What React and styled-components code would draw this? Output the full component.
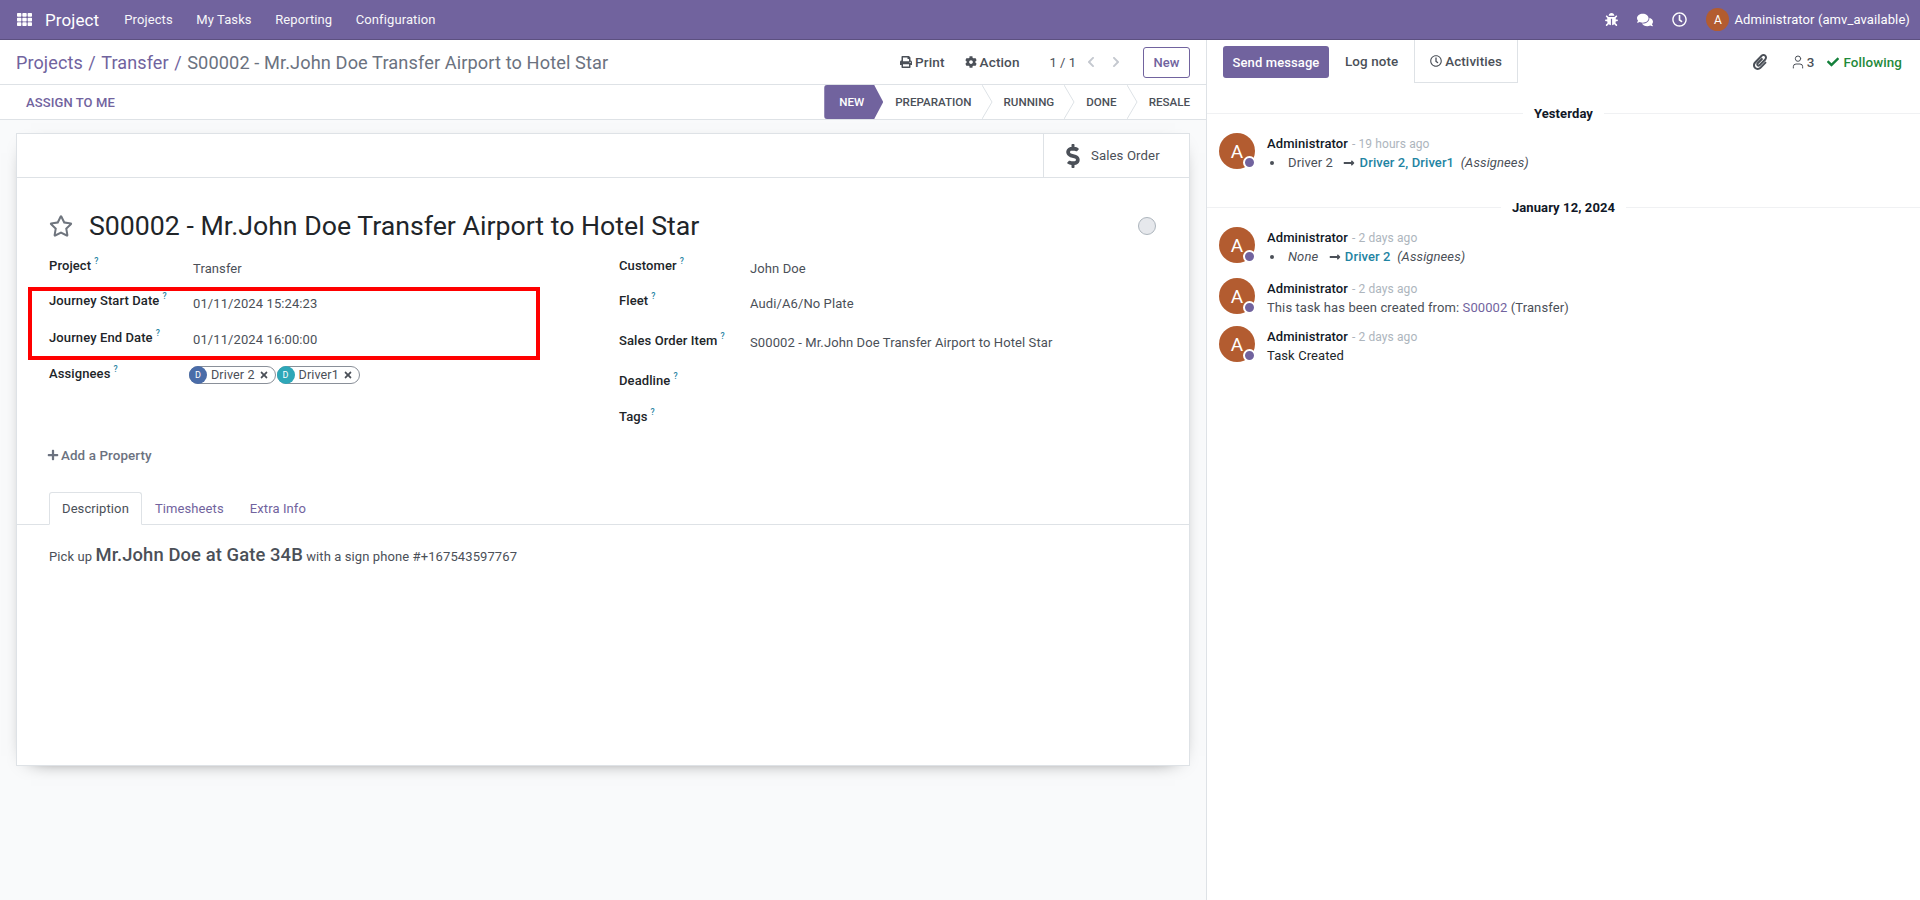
import React from "react";
import styled, { createGlobalStyle } from "styled-components";
import { User } from "lucide-react";
import {
  FaBug,
  FaCheck,
  FaChevronLeft,
  FaChevronRight,
  FaCog,
  FaComments,
  FaDollarSign,
  FaLongArrowAltRight,
  FaPaperclip,
  FaPlus,
  FaPrint,
  FaRegClock,
  FaRegStar,
  FaTh,
  FaTimes,
} from "react-icons/fa";

const PURPLE = "#71639e";
const LINK_BLUE = "#1f84a3";

const GlobalStyle = createGlobalStyle`
  html, body { margin: 0; padding: 0; height: 100%; }
  body {
    font-family: Roboto, "Noto Sans", sans-serif;
    font-size: 13px;
    letter-spacing: 0.1px;
    color: #4b5058;
    background: #fff;
    overflow: hidden;
  }
`;

const Page = styled.div`
  width: 1920px;
  height: 900px;
  display: flex;
  flex-direction: column;
`;

const Navbar = styled.header`
  height: 40px;
  box-sizing: border-box;
  background: ${PURPLE};
  border-bottom: 1px solid #5c5080;
  color: #fff;
  display: flex;
  align-items: center;
  padding: 0 10px 0 17px;
`;

const Brand = styled.span`
  font-size: 17px;
  margin: 0 25px 0 13px;
`;

const NavLink = styled.span`
  margin-right: 23.5px;
  opacity: 0.95;
`;

const NavRight = styled.div`
  margin-left: auto;
  display: flex;
  align-items: center;
  gap: 19px;
`;

const NavAvatar = styled.span`
  width: 23px;
  height: 23px;
  border-radius: 50%;
  background: #b35c30;
  display: flex;
  align-items: center;
  justify-content: center;
  font-size: 12px;
  margin-right: -14px;
`;

const Columns = styled.div`
  flex: 1;
  display: flex;
  min-height: 0;
`;

const Main = styled.main`
  width: 1206px;
  background: #f9fafb;
  display: flex;
  flex-direction: column;
`;

const ControlRow = styled.div`
  height: 45px;
  box-sizing: border-box;
  background: #fff;
  border-bottom: 1px solid #dee2e6;
  display: flex;
  align-items: center;
  padding: 0 16px;
`;

const Crumbs = styled.div`
  font-size: 18px;
  display: flex;
  gap: 5.5px;
  color: ${PURPLE};
`;

const CrumbCurrent = styled.span`
  color: #6b7280;
  font-size: 18.2px;
`;

const Actions = styled.div`
  margin-left: auto;
  display: flex;
  align-items: center;
  font-size: 13.6px;
  font-weight: 500;
`;

const ActionItem = styled.span`
  display: flex;
  align-items: center;
  gap: 3px;
  margin-right: ${(p) => p.$gap}px;
`;

const Pager = styled.span`
  font-weight: 400;
  font-size: 13px;
  margin-right: 9px;
  letter-spacing: 0;
`;

const PagerArrow = styled.span`
  color: #c4c8cf;
  font-size: 12px;
  display: flex;
  margin-right: 13px;
`;

const NewButton = styled.span`
  margin-left: 8px;
  width: 47px;
  height: 31px;
  box-sizing: border-box;
  border: 1px solid ${PURPLE};
  border-radius: 3px;
  color: ${PURPLE};
  display: flex;
  align-items: center;
  justify-content: center;
  font-size: 13px;
  font-weight: 500;
`;

const StatusRow = styled.div`
  height: 35px;
  box-sizing: border-box;
  background: #fff;
  border-bottom: 1px solid #dee2e6;
  display: flex;
  align-items: center;
  justify-content: space-between;
  padding: 0 16px 0 26px;
`;

const AssignLabel = styled.span`
  color: ${PURPLE};
  font-size: 13px;
  font-weight: 500;
`;

const Stages = styled.div`
  display: flex;
  height: 34px;
`;

const Stage = styled.span`
  position: relative;
  display: flex;
  align-items: center;
  font-size: 11.6px;
  letter-spacing: 0;
  font-weight: 500;
  padding-right: ${(p) => (p.$last ? 0 : 21)}px;
  margin-left: ${(p) => (p.$first ? 12 : 11)}px;
  color: #4b5058;
`;

const StageChevron = styled.svg`
  position: absolute;
  right: 0;
  top: 0;
  width: 11px;
  height: 34px;
`;

const ActiveStage = styled.span`
  display: flex;
  align-items: center;
  width: 59px;
  height: 34px;
  box-sizing: border-box;
  padding-left: 15px;
  color: #fff;
  font-size: 11.6px;
  letter-spacing: 0;
  font-weight: 500;
  background: ${PURPLE};
  border-radius: 3px 0 0 3px;
  clip-path: polygon(0 0, 50px 0, 59px 50%, 50px 100%, 0 100%);
`;

const Sheet = styled.section`
  margin: 13px 16px 0 16px;
  height: 633px;
  box-sizing: border-box;
  background: #fff;
  border: 1px solid #dee2e6;
  box-shadow: 0 5px 20px -15px #000;
`;

const ButtonBox = styled.div`
  height: 44px;
  box-sizing: border-box;
  border-bottom: 1px solid #dee2e6;
  display: flex;
  justify-content: flex-end;
`;

const StatButton = styled.div`
  width: 146px;
  box-sizing: border-box;
  border-left: 1px solid #dee2e6;
  display: flex;
  align-items: center;
  padding-left: 17px;
  gap: 6px;
  color: #4b5058;
  font-size: 13.2px;
`;

const TitleRow = styled.div`
  display: flex;
  align-items: center;
  height: 40px;
  margin-top: 28px;
  padding: 0 33px 0 32px;
`;

const Title = styled.h1`
  margin: 0 0 0 16px;
  font-size: 26.7px;
  font-weight: 400;
  letter-spacing: 0;
  color: #212529;
  flex: 1;
`;

const StateDot = styled.span`
  width: 16px;
  height: 16px;
  border-radius: 50%;
  background: #e6e8ec;
  border: 1px solid #adb5bd;
`;

const FormGrid = styled.div`
  display: grid;
  grid-template-columns: 570px 1fr;
  margin-top: 5px;
  padding-left: 32px;
`;

const FormCol = styled.div`
  position: relative;
`;

const Row = styled.div`
  height: ${(p) => p.$h}px;
  display: grid;
  grid-template-columns: ${(p) => p.$label}px 1fr;
  align-items: center;
`;

const Label = styled.span`
  font-weight: 500;
  color: #212529;
  margin-top: -5px;
  white-space: nowrap;
`;

const Help = styled.sup`
  color: ${LINK_BLUE};
  font-size: 8.5px;
  font-weight: 500;
  margin-left: 3px;
  position: relative;
  top: -1px;
`;

const Value = styled.span`
  white-space: nowrap;
`;

const Chips = styled.div`
  display: flex;
  gap: 1px;
  margin-left: -4px;
  margin-top: -3px;
  font-size: 12.6px;
`;

const Chip = styled.span`
  height: 18px;
  box-sizing: border-box;
  border: 1px solid #8a9099;
  border-radius: 9px;
  display: flex;
  align-items: center;
  gap: 4px;
  padding-right: 6px;
`;

const ChipAvatar = styled.span`
  width: 18px;
  height: 18px;
  margin-left: -1px;
  border-radius: 50%;
  background: ${(p) => p.$bg};
  color: #fff;
  font-size: 9px;
  display: flex;
  align-items: center;
  justify-content: center;
`;

const ChipRemove = styled(FaTimes)`
  font-size: 10px;
  color: #4b5058;
`;

const Highlight = styled.div`
  position: absolute;
  left: -21px;
  top: 36px;
  width: 512px;
  height: 73px;
  box-sizing: border-box;
  border: 4px solid #ff0000;
  pointer-events: none;
`;

const AddProperty = styled.div`
  display: flex;
  align-items: center;
  gap: 2px;
  margin: -1px 0 0 30px;
  height: 40px;
  color: #6c7280;
  font-size: 13.4px;
  font-weight: 500;
`;

const TabBar = styled.nav`
  display: flex;
  margin-top: 17px;
  padding-left: 32px;
  height: 33px;
  box-sizing: border-box;
  border-bottom: 1px solid #dee2e6;
`;

const Tab = styled.span`
  height: 33px;
  box-sizing: border-box;
  display: flex;
  align-items: center;
  padding: 0 12px;
  color: ${(p) => (p.$active ? "#4b5058" : PURPLE)};
  background: ${(p) => (p.$active ? "#fff" : "transparent")};
  border: 1px solid ${(p) => (p.$active ? "#dee2e6" : "transparent")};
  border-bottom: 1px solid ${(p) => (p.$active ? "#fff" : "transparent")};
  border-radius: 3px 3px 0 0;
`;

const Description = styled.p`
  margin: 19px 0 0 32px;
`;

const BigText = styled.span`
  font-size: 18.4px;
  font-weight: 500;
`;

const Chatter = styled.aside`
  flex: 1;
  border-left: 1px solid #dee2e6;
  background: #fff;
  min-width: 0;
`;

const ChatterTop = styled.div`
  height: 44px;
  box-sizing: border-box;
  display: flex;
  align-items: flex-start;
  padding: 6px 18px 0 16px;
`;

const SendButton = styled.span`
  width: 106px;
  height: 32px;
  background: ${PURPLE};
  color: #fff;
  border-radius: 3px;
  font-weight: 500;
  display: flex;
  align-items: center;
  justify-content: center;
`;

const ChatterTab = styled.span`
  height: 43px;
  margin-top: -6px;
  box-sizing: border-box;
  padding: ${(p) => (p.$boxed ? "0 15px" : "0 16px")};
  display: flex;
  align-items: center;
  gap: 3px;
  font-weight: 500;
  font-size: 13.4px;
  border-left: ${(p) => (p.$boxed ? "1px solid #dee2e6" : "0")};
  border-right: ${(p) => (p.$boxed ? "1px solid #dee2e6" : "0")};
  border-bottom: ${(p) => (p.$boxed ? "1px solid #dee2e6" : "0")};
`;

const ChatterTools = styled.div`
  margin-left: auto;
  display: flex;
  align-items: center;
  height: 32px;
  font-weight: 500;
  font-size: 13.4px;
`;

const ToolItem = styled.span`
  display: flex;
  align-items: center;
  gap: ${(p) => p.$gap || 3}px;
  margin-right: ${(p) => p.$mr || 0}px;
  color: ${(p) => p.$color || "#4b5058"};
`;

const Divider = styled.div`
  display: flex;
  align-items: center;
  height: 20px;
  margin-top: ${(p) => p.$top}px;
  font-weight: 700;
  color: #111827;
  &::before,
  &::after {
    content: "";
    flex: 1;
    height: 1px;
    background: #f0f1f3;
  }
  span {
    padding: 0 11px;
  }
`;

const Message = styled.article`
  display: flex;
  height: 36px;
  margin-top: ${(p) => p.$top}px;
  padding-left: 12px;
`;

const Avatar = styled.div`
  position: relative;
  width: 36px;
  height: 36px;
  border-radius: 50%;
  background: #b35c30;
  color: #fff;
  font-size: 19px;
  display: flex;
  align-items: center;
  justify-content: center;
  margin-right: 12px;
  flex: none;
`;

const Presence = styled.span`
  position: absolute;
  right: -1px;
  bottom: 0;
  width: 9px;
  height: 9px;
  border-radius: 50%;
  background: ${PURPLE};
  border: 2px solid #fff;
`;

const MsgText = styled.div`
  padding-top: 1px;
`;

const MsgHead = styled.div`
  line-height: 19px;
`;

const Author = styled.span`
  font-weight: 500;
  color: #111827;
`;

const When = styled.span`
  color: #adb5bd;
  font-size: 12px;
  margin-left: 4px;
`;

const MsgBody = styled.div`
  line-height: 18px;
  display: flex;
  align-items: center;
  white-space: pre;
  color: ${(p) => p.$color || "#4b5058"};
`;

const Bullet = styled.span`
  width: 4px;
  height: 4px;
  border-radius: 50%;
  background: #4b5058;
  margin: 0 14px 0 3px;
`;

const NewValue = styled.span`
  color: ${LINK_BLUE};
  font-weight: 500;
`;

const Italic = styled.em`
  font-style: italic;
`;

const Arrow = styled(FaLongArrowAltRight)`
  margin: 0 1px 0 7px;
  font-size: 12px;
`;

const RecordLink = styled.span`
  color: ${PURPLE};
`;

const FieldRow = ({ h, label, width, children }) => (
  <Row $h={h} $label={width}>
    <Label>
      {label}
      <Help>?</Help>
    </Label>
    {children}
  </Row>
);

const Person = ({ name, bg }) => (
  <Chip>
    <ChipAvatar $bg={bg}>D</ChipAvatar>
    {name}
    <ChipRemove />
  </Chip>
);

const ChatMessage = ({ top, when, children }) => (
  <Message $top={top}>
    <Avatar>
      A
      <Presence />
    </Avatar>
    <MsgText>
      <MsgHead>
        <Author>Administrator</Author>
        <When>- {when}</When>
      </MsgHead>
      {children}
    </MsgText>
  </Message>
);

const stages = ["PREPARATION", "RUNNING", "DONE", "RESALE"];

export default function App() {
  return (
    <Page>
      <GlobalStyle />
      <Navbar>
        <FaTh size={15} />
        <Brand>Project</Brand>
        <NavLink>Projects</NavLink>
        <NavLink>My Tasks</NavLink>
        <NavLink>Reporting</NavLink>
        <NavLink>Configuration</NavLink>
        <NavRight>
          <FaBug size={13} />
          <FaComments size={16} />
          <FaRegClock size={15} />
          <NavAvatar>A</NavAvatar>
          <span>Administrator (amv_available)</span>
        </NavRight>
      </Navbar>
      <Columns>
        <Main>
          <ControlRow>
            <Crumbs>
              <span>Projects</span>
              <span>/</span>
              <span>Transfer</span>
              <span>/</span>
              <CrumbCurrent>S00002 - Mr.John Doe Transfer Airport to Hotel Star</CrumbCurrent>
            </Crumbs>
            <Actions>
              <ActionItem $gap={20}>
                <FaPrint size={12} />
                Print
              </ActionItem>
              <ActionItem $gap={30}>
                <FaCog size={12} />
                Action
              </ActionItem>
              <Pager>1 / 1</Pager>
              <PagerArrow>
                <FaChevronLeft />
              </PagerArrow>
              <PagerArrow>
                <FaChevronRight />
              </PagerArrow>
              <NewButton>New</NewButton>
            </Actions>
          </ControlRow>
          <StatusRow>
            <AssignLabel>ASSIGN TO ME</AssignLabel>
            <Stages>
              <ActiveStage>NEW</ActiveStage>
              {stages.map((name, i) => (
                <Stage key={name} $first={i === 0} $last={i === stages.length - 1}>
                  {name}
                  {i < stages.length - 1 && (
                    <StageChevron viewBox="0 0 11 34">
                      <path d="M0 0 L10 17 L0 34" fill="none" stroke="#dee2e6" />
                    </StageChevron>
                  )}
                </Stage>
              ))}
            </Stages>
          </StatusRow>
          <Sheet>
            <ButtonBox>
              <StatButton>
                <FaDollarSign size={24} color="#4b5058" />
                Sales Order
              </StatButton>
            </ButtonBox>
            <TitleRow>
              <FaRegStar size={24} color="#6f757e" />
              <Title>S00002 - Mr.John Doe Transfer Airport to Hotel Star</Title>
              <StateDot />
            </TitleRow>
            <FormGrid>
              <FormCol>
                <FieldRow h={34} width={144} label="Project">
                  <Value>Transfer</Value>
                </FieldRow>
                <FieldRow h={36} width={144} label="Journey Start Date">
                  <Value>01/11/2024 15:24:23</Value>
                </FieldRow>
                <FieldRow h={37} width={144} label="Journey End Date">
                  <Value>01/11/2024 16:00:00</Value>
                </FieldRow>
                <FieldRow h={36} width={144} label="Assignees">
                  <Chips>
                    <Person name="Driver 2" bg="#4a6ca8" />
                    <Person name="Driver1" bg="#2ea7b8" />
                  </Chips>
                </FieldRow>
                <Highlight />
              </FormCol>
              <FormCol>
                <FieldRow h={34} width={131} label="Customer">
                  <Value>John Doe</Value>
                </FieldRow>
                <FieldRow h={36} width={131} label="Fleet">
                  <Value>Audi/A6/No Plate</Value>
                </FieldRow>
                <FieldRow h={43} width={131} label="Sales Order Item">
                  <Value>S00002 - Mr.John Doe Transfer Airport to Hotel Star</Value>
                </FieldRow>
                <FieldRow h={37} width={131} label="Deadline">
                  <Value />
                </FieldRow>
                <FieldRow h={35} width={131} label="Tags">
                  <Value />
                </FieldRow>
              </FormCol>
            </FormGrid>
            <AddProperty>
              <FaPlus size={12} />
              Add a Property
            </AddProperty>
            <TabBar>
              <Tab $active>Description</Tab>
              <Tab>Timesheets</Tab>
              <Tab>Extra Info</Tab>
            </TabBar>
            <Description>
              Pick up <BigText>Mr.John Doe at Gate 34B</BigText> with a sign phone #+167543597767
            </Description>
          </Sheet>
        </Main>
        <Chatter>
          <ChatterTop>
            <SendButton>Send message</SendButton>
            <ChatterTab>Log note</ChatterTab>
            <ChatterTab $boxed>
              <FaRegClock size={12} />
              Activities
            </ChatterTab>
            <ChatterTools>
              <ToolItem $mr={22}>
                <FaPaperclip size={16} />
              </ToolItem>
              <ToolItem $mr={13} $gap={1}>
                <User size={16} strokeWidth={1.5} />3
              </ToolItem>
              <ToolItem $color="#1f8a3b" $gap={4}>
                <FaCheck size={12} color="#13803a" />
                Following
              </ToolItem>
            </ChatterTools>
          </ChatterTop>
          <Divider $top={19}>
            <span>Yesterday</span>
          </Divider>
          <ChatMessage top={10} when="19 hours ago">
            <MsgBody>
              <Bullet />
              Driver 2 <Arrow />
              <NewValue> Driver 2, Driver1</NewValue>
              <Italic>  (Assignees)</Italic>
            </MsgBody>
          </ChatMessage>
          <Divider $top={28}>
            <span>January 12, 2024</span>
          </Divider>
          <ChatMessage top={10} when="2 days ago">
            <MsgBody>
              <Bullet />
              <Italic>None </Italic>
              <Arrow />
              <NewValue> Driver 2</NewValue>
              <Italic>  (Assignees)</Italic>
            </MsgBody>
          </ChatMessage>
          <ChatMessage top={15} when="2 days ago">
            <MsgBody>
              This task has been created from: <RecordLink>S00002</RecordLink> (Transfer)
            </MsgBody>
          </ChatMessage>
          <ChatMessage top={12} when="2 days ago">
            <MsgBody $color="#212529">Task Created</MsgBody>
          </ChatMessage>
        </Chatter>
      </Columns>
    </Page>
  );
}
